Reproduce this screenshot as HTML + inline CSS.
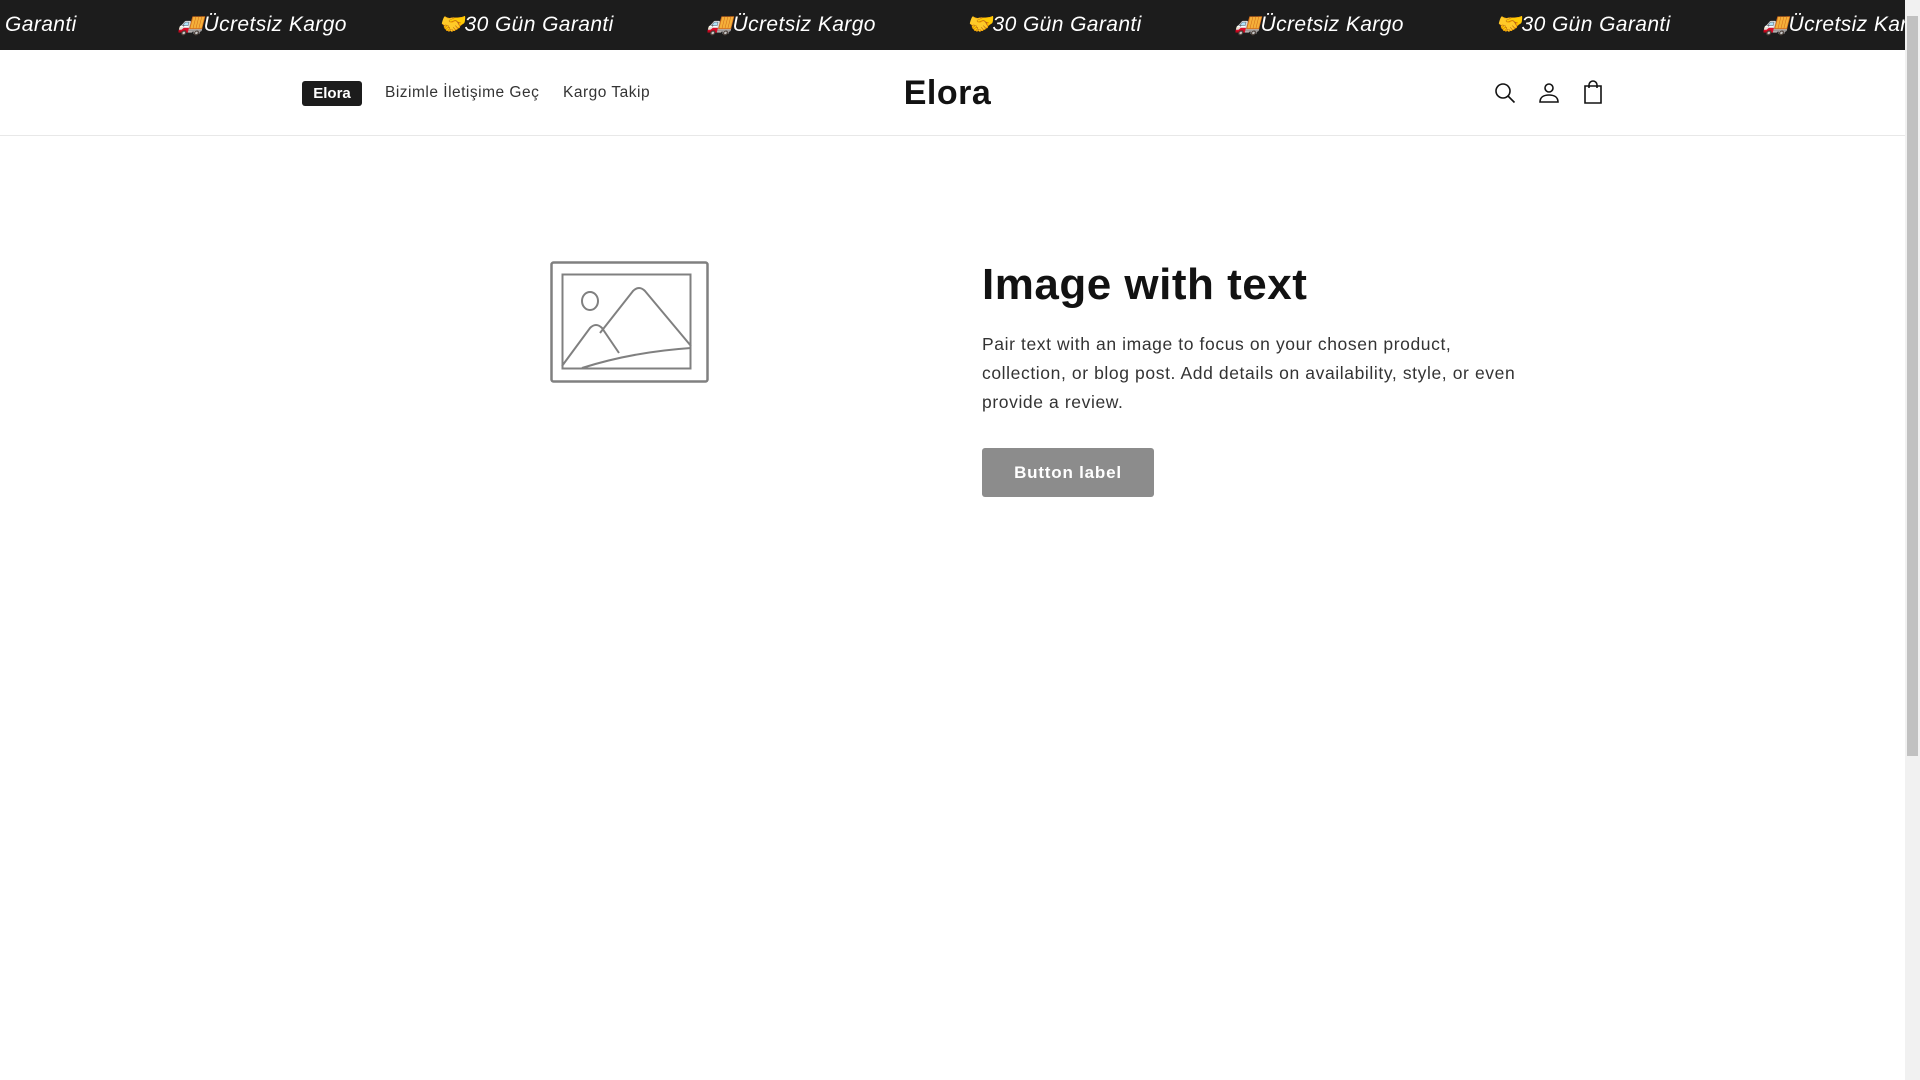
<!DOCTYPE html>
<html><head><meta charset="utf-8"><style>
*{margin:0;padding:0;box-sizing:border-box}
html,body{width:1920px;height:1080px;overflow:hidden;background:#fff;font-family:"Liberation Sans",sans-serif;color:#121212}
.bar{position:absolute;left:0;top:0;width:1905px;height:50px;background:#1c1c1c;color:#fff;overflow:hidden;white-space:nowrap}
.bar span{position:absolute;top:13px;font-style:italic;font-size:21px;letter-spacing:.4px}
.sb{position:absolute;right:0;top:0;width:15px;height:1080px;background:#f1f1f1}
.sb div{position:absolute;left:2px;top:16px;width:11px;height:740px;background:#c1c1c1}
.hdr{position:absolute;left:0;top:50px;width:1905px;height:86px;border-bottom:1px solid #e8e8e8}
.badge{position:absolute;left:302px;top:31px;width:60px;height:25px;background:#1c1c1c;color:#fff;border-radius:3px;font-weight:bold;font-size:15px;text-align:center;line-height:25px}
.nav{position:absolute;top:34px;font-size:15.5px;color:#333;letter-spacing:.5px}
.logo{position:absolute;left:0;width:1895px;text-align:center;top:24px;font-size:34px;font-weight:bold;letter-spacing:.5px}
.ic{position:absolute;top:32px}
h1{position:absolute;left:982px;top:260px;font-size:44px;font-weight:bold;letter-spacing:.5px}
p{position:absolute;left:982px;top:330px;width:550px;font-size:17.5px;line-height:29px;color:#333;letter-spacing:.6px}
.btn{position:absolute;left:982px;top:448px;width:172px;height:49px;background:#8c8c8c;color:#fff;border-radius:3px;font-weight:bold;font-size:17px;text-align:center;line-height:49px;letter-spacing:.8px}
</style></head><body>
<div class="bar">
<span style="left:5px">Garanti</span>
<span style="left:177px">🚚Ücretsiz Kargo</span>
<span style="left:438px">🤝30 Gün Garanti</span>
<span style="left:706px">🚚Ücretsiz Kargo</span>
<span style="left:966px">🤝30 Gün Garanti</span>
<span style="left:1234px">🚚Ücretsiz Kargo</span>
<span style="left:1495px">🤝30 Gün Garanti</span>
<span style="left:1762px">🚚Ücretsiz Kargo</span>
</div>
<div class="hdr">
<div class="badge">Elora</div>
<div class="nav" style="left:385px">Bizimle İletişime Geç</div>
<div class="nav" style="left:563px">Kargo Takip</div>
<div class="logo">Elora</div>
<svg class="ic" style="left:1494px" width="22" height="22" viewBox="0 0 22 22" fill="none" stroke="#121212" stroke-width="1.6"><circle cx="9" cy="9" r="7"/><path d="M14 14l6.5 6.5"/></svg>
<svg class="ic" style="left:1538px" width="22" height="22" viewBox="0 0 22 22" fill="none" stroke="#121212" stroke-width="1.6"><circle cx="11" cy="6" r="4"/><path d="M2 20c0-5 4-7 9-7s9 2 9 7z"/></svg>
<svg class="ic" style="left:1582px;top:30px" width="22" height="24" viewBox="0 0 22 24" fill="none" stroke="#121212" stroke-width="1.6"><path d="M3 6h16v17H3z"/><path d="M7 8V5a4 4 0 0 1 8 0v3"/></svg>
</div>
<svg style="position:absolute;left:550px;top:261px" width="159" height="122" viewBox="0 0 159 122" fill="none" stroke="#808080" stroke-width="2.5"><rect x="1.5" y="1.5" width="156" height="119" rx="2"/><rect x="12.5" y="13.5" width="128" height="94" stroke-width="2"/><ellipse cx="40" cy="40" rx="8" ry="9" stroke-width="2"/><path d="M12 105l28-38q6-6 12 0l17 25M50 72l33-42q6-6 12 0l46 55M32 107q50-16 109-20" stroke-width="2"/></svg>
<h1>Image with text</h1>
<p>Pair text with an image to focus on your chosen product, collection, or blog post. Add details on availability, style, or even provide a review.</p>
<div class="btn">Button label</div>
<div class="sb"><div></div></div>
</body></html>
